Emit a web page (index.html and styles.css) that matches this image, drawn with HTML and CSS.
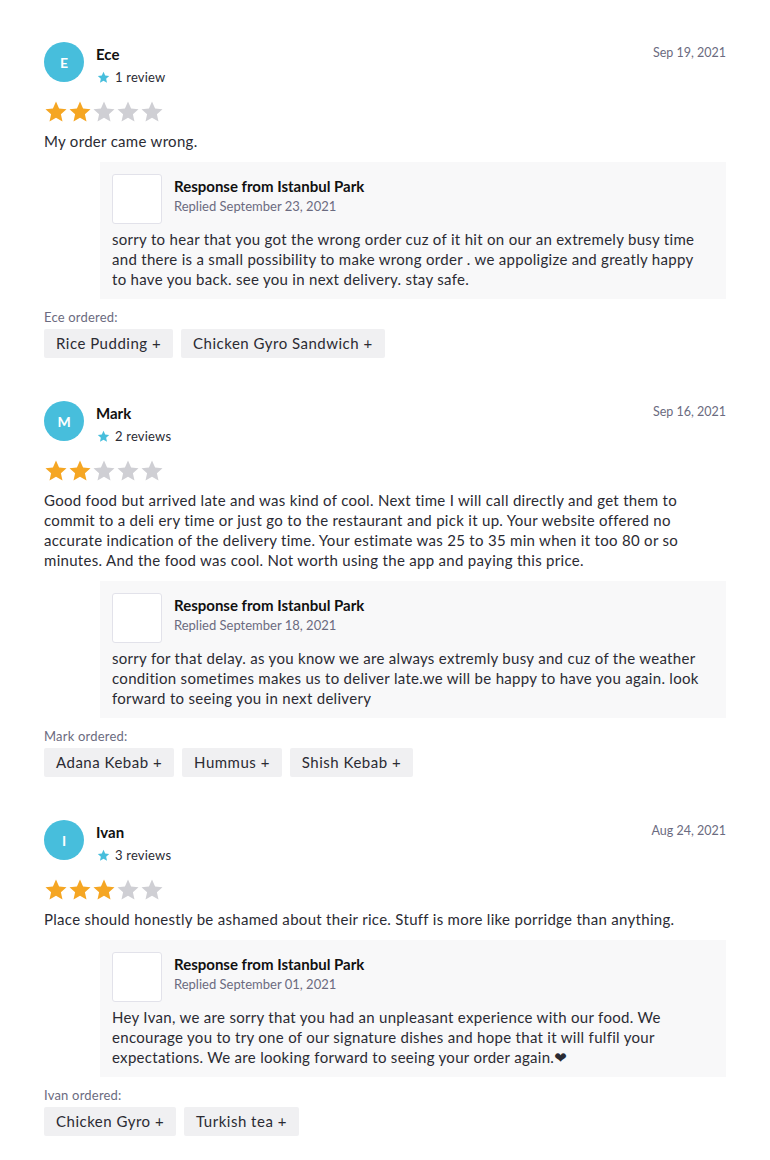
FILE: index.html
```html
<!DOCTYPE html>
<html>
<head>
<meta charset="utf-8">
<link rel="stylesheet" href="styles.css">
</head>
<body>
<svg width="0" height="0" class="defs">
  <defs>
    <symbol id="star" viewBox="0 0 24 24"><path d="M12 1.5l3.09 6.91 7.41.74-5.6 5 1.6 7.35L12 17.8l-6.5 3.7 1.6-7.35-5.6-5 7.41-.74z"/></symbol>
  </defs>
</svg>
<main class="page">

  <article class="review">
    <header class="review-head">
      <div class="avatar">E</div>
      <div class="who">
        <div class="name">Ece</div>
        <div class="count"><svg class="mini-star"><use href="#star"/></svg>1 review</div>
      </div>
      <div class="date">Sep 19, 2021</div>
    </header>
    <div class="stars">
      <svg class="star on"><use href="#star"/></svg><svg class="star on"><use href="#star"/></svg><svg class="star"><use href="#star"/></svg><svg class="star"><use href="#star"/></svg><svg class="star"><use href="#star"/></svg>
    </div>
    <p class="text">My order came wrong.</p>
    <section class="response">
      <div class="resp-head">
        <div class="logo"></div>
        <div>
          <div class="resp-title">Response from Istanbul Park</div>
          <div class="resp-date">Replied September 23, 2021</div>
        </div>
      </div>
      <p class="resp-text">sorry to hear that you got the wrong order cuz of it hit on our an extremely busy time and there is a small possibility to make wrong order . we appoligize and greatly happy to have you back. see you in next delivery. stay safe.</p>
    </section>
    <div class="ordered">Ece ordered:</div>
    <div class="chips">
      <span class="chip">Rice Pudding +</span>
      <span class="chip">Chicken Gyro Sandwich +</span>
    </div>
  </article>

  <article class="review">
    <header class="review-head">
      <div class="avatar">M</div>
      <div class="who">
        <div class="name">Mark</div>
        <div class="count"><svg class="mini-star"><use href="#star"/></svg>2 reviews</div>
      </div>
      <div class="date">Sep 16, 2021</div>
    </header>
    <div class="stars">
      <svg class="star on"><use href="#star"/></svg><svg class="star on"><use href="#star"/></svg><svg class="star"><use href="#star"/></svg><svg class="star"><use href="#star"/></svg><svg class="star"><use href="#star"/></svg>
    </div>
    <p class="text">Good food but arrived late and was kind of cool. Next time I will call directly and get them to commit to a deli ery time or just go to the restaurant and pick it up. Your website offered no accurate indication of the delivery time. Your estimate was 25 to 35 min when it too 80 or so minutes. And the food was cool. Not worth using the app and paying this price.</p>
    <section class="response">
      <div class="resp-head">
        <div class="logo"></div>
        <div>
          <div class="resp-title">Response from Istanbul Park</div>
          <div class="resp-date">Replied September 18, 2021</div>
        </div>
      </div>
      <p class="resp-text">sorry for that delay. as you know we are always extremly busy and cuz of the weather condition sometimes makes us to deliver late.we will be happy to have you again. look forward to seeing you in next delivery</p>
    </section>
    <div class="ordered">Mark ordered:</div>
    <div class="chips">
      <span class="chip">Adana Kebab +</span>
      <span class="chip">Hummus +</span>
      <span class="chip">Shish Kebab +</span>
    </div>
  </article>

  <article class="review">
    <header class="review-head">
      <div class="avatar">I</div>
      <div class="who">
        <div class="name">Ivan</div>
        <div class="count"><svg class="mini-star"><use href="#star"/></svg>3 reviews</div>
      </div>
      <div class="date">Aug 24, 2021</div>
    </header>
    <div class="stars">
      <svg class="star on"><use href="#star"/></svg><svg class="star on"><use href="#star"/></svg><svg class="star on"><use href="#star"/></svg><svg class="star"><use href="#star"/></svg><svg class="star"><use href="#star"/></svg>
    </div>
    <p class="text">Place should honestly be ashamed about their rice. Stuff is more like porridge than anything.</p>
    <section class="response">
      <div class="resp-head">
        <div class="logo"></div>
        <div>
          <div class="resp-title">Response from Istanbul Park</div>
          <div class="resp-date">Replied September 01, 2021</div>
        </div>
      </div>
      <p class="resp-text">Hey Ivan, we are sorry that you had an unpleasant experience with our food. We encourage you to try one of our signature dishes and hope that it will fulfil your expectations. We are looking forward to seeing your order again.❤</p>
    </section>
    <div class="ordered">Ivan ordered:</div>
    <div class="chips">
      <span class="chip">Chicken Gyro +</span>
      <span class="chip">Turkish tea +</span>
    </div>
  </article>

</main>
</body>
</html>
```

FILE: styles.css
```css
* { box-sizing: border-box; }
body {
  margin: 0;
  background: #ffffff;
  font-family: "Lato", "DejaVu Sans", "Liberation Sans", sans-serif;
  color: #2b2b33;
}
.defs { position: absolute; width: 0; height: 0; }
.page {
  padding: 42px 44px 0 44px;
}
.review + .review { margin-top: 43px; }
.review-head {
  display: flex;
  align-items: flex-start;
}
.avatar {
  width: 40px;
  height: 40px;
  border-radius: 50%;
  background: #47bedc;
  color: #fff;
  font-weight: 700;
  font-size: 14px;
  display: flex;
  align-items: center;
  justify-content: center;
  flex: none;
}
.who {
  margin-left: 12px;
  flex: 1;
  padding-top: 2px;
}
.name {
  font-weight: 700;
  font-size: 15px;
  line-height: 20px;
  color: #111;
}
.count {
  margin-top: 3px;
  font-size: 13px;
  line-height: 20px;
  letter-spacing: 0.2px;
  display: flex;
  align-items: center;
  color: #2b2b33;
}
.mini-star {
  width: 13px;
  height: 13px;
  fill: #47bedc;
  margin: 0 5px 0 1px;
}
.date {
  font-size: 12.5px;
  line-height: 20px;
  margin-top: 1px;
  color: #6b6b80;
}
.stars {
  display: flex;
  margin-top: 13px;
  height: 24px;
}
.star {
  width: 24px;
  height: 24px;
  fill: #cfcfd4;
}
.star.on { fill: #f5a623; }
.text {
  margin: 7px 0 0 0;
  font-size: 15px;
  line-height: 20px;
  letter-spacing: 0.3px;
}
.response {
  margin: 11px 0 0 56px;
  background: #f8f8f9;
  padding: 12px 16px 10px 12px;
}
.resp-head {
  display: flex;
  align-items: flex-start;
}
.logo {
  width: 50px;
  height: 50px;
  border: 1px solid #e2e2ea;
  border-radius: 3px;
  background: #fff;
  margin-right: 12px;
  flex: none;
}
.resp-title {
  font-weight: 700;
  font-size: 15px;
  line-height: 20px;
  margin-top: 2px;
  color: #111;
}
.resp-date {
  font-size: 13px;
  line-height: 20px;
  color: #6b6b80;
}
.resp-text {
  margin: 5px 0 0 0;
  font-size: 15px;
  line-height: 20px;
  letter-spacing: 0.3px;
}
.ordered {
  margin-top: 9px;
  font-size: 13px;
  line-height: 18px;
  letter-spacing: 0.2px;
  color: #6b6b80;
}
.chips {
  display: flex;
  gap: 8px;
  margin-top: 3px;
}
.chip {
  background: #f0f0f2;
  border-radius: 2px;
  padding: 0 12px;
  height: 29px;
  line-height: 29px;
  font-size: 15px;
  letter-spacing: 0.5px;
  color: #2b2b33;
}
```
